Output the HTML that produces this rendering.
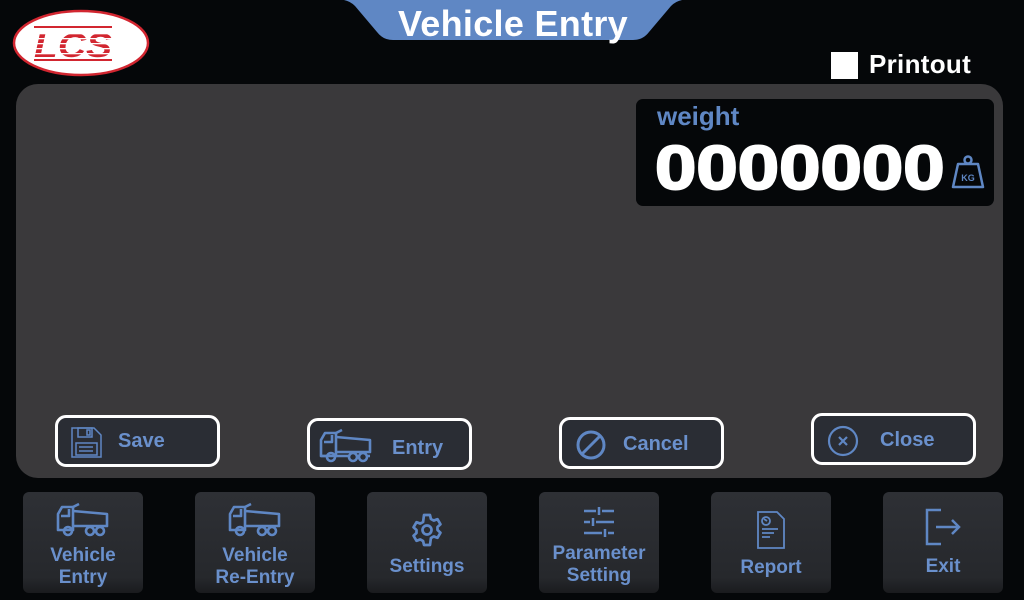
<!DOCTYPE html>
<html><head><meta charset="utf-8"><style>
*{margin:0;padding:0;box-sizing:border-box}
body{width:1024px;height:600px;background:#050709;position:relative;overflow:hidden;font-family:"Liberation Sans",sans-serif;font-weight:bold}
.abs{position:absolute}
.panel{left:16px;top:84px;width:987px;height:394px;background:#3a393b;border-radius:22px}
.wbox{left:636px;top:99px;width:358px;height:107px;background:#050709;border-radius:7px}
.btn{position:absolute;width:165px;height:52px;border:3px solid #fff;border-radius:11px;background:#2a2d34;color:#6a90cc;font-size:20px}
.btn svg{position:absolute;left:12px;top:8px}
.btn span{position:absolute;left:60px;top:12px}
.nb{position:absolute;top:492px;width:120px;height:101px;border-radius:6px;background:linear-gradient(#2e3035,#26282c 85%,#1a1b1e);color:#6a90cc;font-size:19px;text-align:center;line-height:22px}
.nb svg{position:absolute;left:50%;transform:translateX(-50%)}
</style></head><body>
<svg class="abs" style="left:12px;top:9px" width="140" height="68" viewBox="0 0 140 68">
<ellipse cx="69" cy="34" rx="67" ry="32" fill="#fff" stroke="#d22630" stroke-width="2.5"/>
<g fill="#d22630"><rect x="22" y="17" width="78" height="2"/><rect x="22" y="50" width="78" height="2"/></g>
<text x="22" y="48" font-family="Liberation Sans" font-style="italic" font-weight="bold" font-size="34" fill="#d22630" textLength="78" lengthAdjust="spacingAndGlyphs">LCS</text>
<g fill="#fff"><rect x="20" y="24" width="100" height="1.3"/><rect x="20" y="29" width="100" height="1.3"/><rect x="20" y="34" width="100" height="1.3"/><rect x="20" y="39" width="100" height="1.3"/><rect x="20" y="44" width="100" height="1.3"/></g>
</svg>
<svg class="abs" style="left:333px;top:0" width="360" height="42" viewBox="0 0 360 42"><path d="M2 0 Q14 -2 22 6 L44 32 Q50 40 60 40 L300 40 Q310 40 316 32 L338 6 Q346 -2 358 0 Z" fill="#5f87c4"/></svg>
<div class="abs" style="left:333px;width:360px;top:3px;text-align:center;color:#fff;font-size:36px;letter-spacing:0.3px">Vehicle Entry</div>
<div class="abs" style="left:831px;top:52px;width:27px;height:27px;background:#fff"></div>
<div class="abs" style="left:869px;top:49px;color:#fff;font-size:26px;letter-spacing:0.3px">Printout</div>
<div class="abs panel"></div>
<div class="abs wbox"></div>
<div class="abs" style="left:657px;top:101px;color:#5f87c4;font-size:26px">weight</div>
<div class="abs" style="left:655px;top:133px;color:#fff;font-size:62px;transform:scaleX(1.2);transform-origin:left;-webkit-text-stroke:2px #fff">0000000</div>
<svg class="abs" style="left:951px;top:154px" width="34" height="35" viewBox="0 0 34 35"><circle cx="17" cy="6" r="3.5" fill="none" stroke="#5f87c4" stroke-width="2.5"/><path d="M7 10 H27 L32 33 H2 Z" fill="none" stroke="#5f87c4" stroke-width="2.5" stroke-linejoin="round"/><text x="17" y="27" text-anchor="middle" font-size="9" fill="#5f87c4" font-family="Liberation Sans" font-weight="bold">KG</text></svg>

<div class="btn" style="left:55px;top:415px"><svg width="34" height="34" viewBox="0 0 34 34" fill="none" stroke="#5f87c4" stroke-width="1.5"><path d="M2 2H24L31 9V31H2Z"/><rect x="8" y="2" width="14" height="9"/><rect x="17" y="4" width="3" height="5"/><rect x="6" y="17" width="21" height="12"/><path d="M9 21H23M9 25H23"/></svg><span>Save</span></div>
<div class="btn" style="left:307px;top:418px"><svg style="left:8px;top:7px" width="56" height="36" viewBox="0 0 56 36" fill="none" stroke="#5f87c4" stroke-width="2.6" stroke-linejoin="round"><path d="M3 28V12L7 5H18V28Z"/><path d="M6 14H14V7"/><path d="M18 9L52 12V24H18"/><path d="M18 5L24 2"/><path d="M3 28H9M17 28H31M50 28H52"/><circle cx="13" cy="29" r="4"/><circle cx="35" cy="29" r="4"/><circle cx="45" cy="29" r="4"/></svg><span style="left:82px;top:16px">Entry</span></div>
<div class="btn" style="left:559px;top:417px"><svg width="34" height="34" viewBox="0 0 34 34" fill="none" stroke="#5f87c4" stroke-width="3"><circle cx="17" cy="17" r="13"/><path d="M8 26L26 8"/></svg><span style="left:61px;top:13px">Cancel</span></div>
<div class="btn" style="left:811px;top:413px"><svg width="34" height="34" viewBox="0 0 34 34" fill="none" stroke="#5f87c4" stroke-width="2.2"><circle cx="17" cy="17" r="14"/><path d="M13 13L21 21M21 13L13 21"/></svg><span style="left:66px;top:13px">Close</span></div>

<div class="nb" style="left:23px"><svg style="top:10px" width="56" height="36" viewBox="0 0 56 36" fill="none" stroke="#5f87c4" stroke-width="2.6" stroke-linejoin="round"><path d="M3 28V12L7 5H18V28Z"/><path d="M6 14H14V7"/><path d="M18 9L52 12V24H18"/><path d="M18 5L24 2"/><circle cx="13" cy="29" r="4"/><circle cx="35" cy="29" r="4"/><circle cx="45" cy="29" r="4"/></svg><div style="padding-top:53px">Vehicle<br>Entry</div></div>
<div class="nb" style="left:195px"><svg style="top:10px" width="56" height="36" viewBox="0 0 56 36" fill="none" stroke="#5f87c4" stroke-width="2.6" stroke-linejoin="round"><path d="M3 28V12L7 5H18V28Z"/><path d="M6 14H14V7"/><path d="M18 9L52 12V24H18"/><path d="M18 5L24 2"/><circle cx="13" cy="29" r="4"/><circle cx="35" cy="29" r="4"/><circle cx="45" cy="29" r="4"/></svg><div style="padding-top:53px">Vehicle<br>Re-Entry</div></div>
<div class="nb" style="left:367px"><svg style="top:20px" width="36" height="36" viewBox="0 0 24 24" fill="none" stroke="#5f87c4" stroke-width="1.8" stroke-linejoin="round"><circle cx="12" cy="12" r="3"/><path d="M10 2h4l.6 2.6 1.9 1.1 2.5-.9 2 3.4-2 1.8v2l2 1.8-2 3.4-2.5-.9-1.9 1.1L14 22h-4l-.6-2.6-1.9-1.1-2.5.9-2-3.4 2-1.8v-2l-2-1.8 2-3.4 2.5.9 1.9-1.1Z"/></svg><div style="padding-top:64px">Settings</div></div>
<div class="nb" style="left:539px"><svg style="top:14px" width="34" height="32" viewBox="0 0 34 32" fill="none" stroke="#5f87c4" stroke-width="2.5"><path d="M2 5H14M20 5H32M17 1V9M2 16H8M14 16H32M11 12V20M2 27H20M26 27H32M23 23V31"/></svg><div style="padding-top:51px">Parameter<br>Setting</div></div>
<div class="nb" style="left:711px"><svg style="top:18px" width="30" height="40" viewBox="0 0 30 40" fill="none" stroke="#5f87c4" stroke-width="1.8"><path d="M2 2H21L28 9V38H2Z"/><circle cx="10" cy="11" r="4"/><path d="M8 9L11 11M6 19H22M6 23H18M6 27H14"/></svg><div style="padding-top:65px">Report</div></div>
<div class="nb" style="left:883px"><svg style="top:16px" width="38" height="38" viewBox="0 0 38 38" fill="none" stroke="#5f87c4" stroke-width="2.5"><path d="M17 2H3V36H17"/><path d="M12 19H35M28 12L35 19L28 26"/></svg><div style="padding-top:64px">Exit</div></div>
</body></html>
